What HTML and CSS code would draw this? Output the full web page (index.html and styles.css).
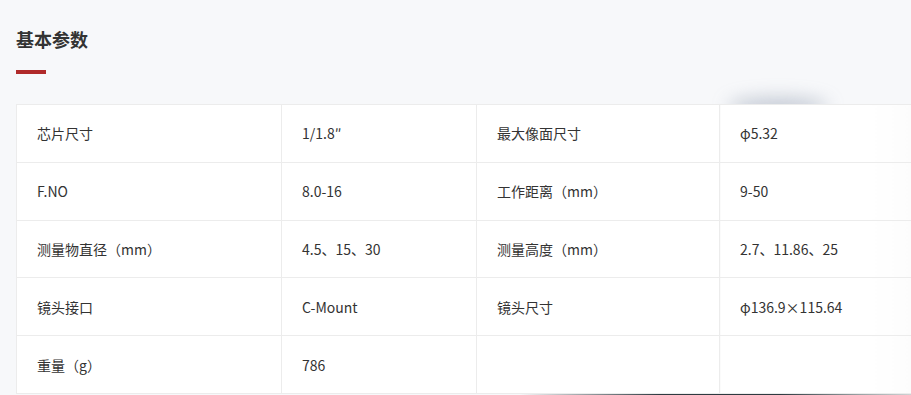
FILE: index.html
```html
<!DOCTYPE html>
<html lang="zh-CN">
<head>
<meta charset="utf-8">
<title>基本参数</title>
<link rel="stylesheet" href="styles.css">
</head>
<body>
<div class="page">
  <h2 class="title">基本参数</h2>
  <div class="title-bar"></div>
  <div class="table-wrap">
    <div class="shade shade-top"></div>
    <div class="shade shade-right"></div>
    <table class="params">
      <colgroup>
        <col class="c1"><col class="c2"><col class="c3"><col class="c4">
      </colgroup>
      <tr><td>芯片尺寸</td><td>1/1.8″</td><td>最大像面尺寸</td><td>φ5.32</td></tr>
      <tr><td>F.NO</td><td>8.0-16</td><td>工作距离（mm）</td><td>9-50</td></tr>
      <tr><td>测量物直径（mm）</td><td>4.5、15、30</td><td>测量高度（mm）</td><td>2.7、11.86、25</td></tr>
      <tr><td>镜头接口</td><td>C-Mount</td><td>镜头尺寸</td><td>φ136.9×115.64</td></tr>
      <tr><td>重量（g）</td><td>786</td><td></td><td></td></tr>
    </table>
  </div>
  <div class="edge"></div>
</div>
</body>
</html>
```
FILE: styles.css
```css
html, body {
  margin: 0;
  padding: 0;
  overflow: hidden;
  background: #f7f8fa;
}
body {
  font-family: "Noto Sans CJK SC", "Noto Sans", sans-serif;
  color: #333;
}
.page {
  padding: 26px 0 0 16px;
}
.title {
  margin: 0;
  font-size: 18px;
  line-height: 26px;
  font-weight: 700;
  color: #333;
}
.title-bar {
  width: 30px;
  height: 4px;
  background: #b02a2a;
  margin-top: 18px;
}
.table-wrap {
  position: relative;
  margin-top: 30px;
}
.shade {
  position: absolute;
  border-radius: 50%;
  filter: blur(9px);
  z-index: 0;
}
.shade-top {
  left: 712px;
  top: -6px;
  width: 100px;
  height: 18px;
  background: rgba(110, 125, 150, 0.4);
}
.shade-right {
  left: 892px;
  top: 150px;
  width: 60px;
  height: 110px;
  background: rgba(0, 0, 0, 0.1);
}
.params {
  position: relative;
  z-index: 1;
  border-collapse: collapse;
  width: 1000px;
  table-layout: fixed;
  background: #fff;
  font-size: 14px;
  line-height: 20px;
}
.c1 { width: 265px; }
.c2 { width: 195px; }
.c3 { width: 243px; }
.c4 { width: 297px; }
.params td {
  border: 1px solid #ececec;
  height: 57.8px;
  padding: 0 20px;
  box-sizing: border-box;
  vertical-align: middle;
  white-space: nowrap;
}
.params tr td:last-child {
  background: linear-gradient(to right, #fff 0, #fff 150px, #f7f7f7 260px);
}
.edge {
  height: 2px;
  margin-left: -16px;
  background: linear-gradient(to right, #f7f8fa 0, #f7f8fa 520px, #2e3a40 660px, #2e3a40 780px, #9aa2a4 860px, #cfd3d4 911px);
}
```
